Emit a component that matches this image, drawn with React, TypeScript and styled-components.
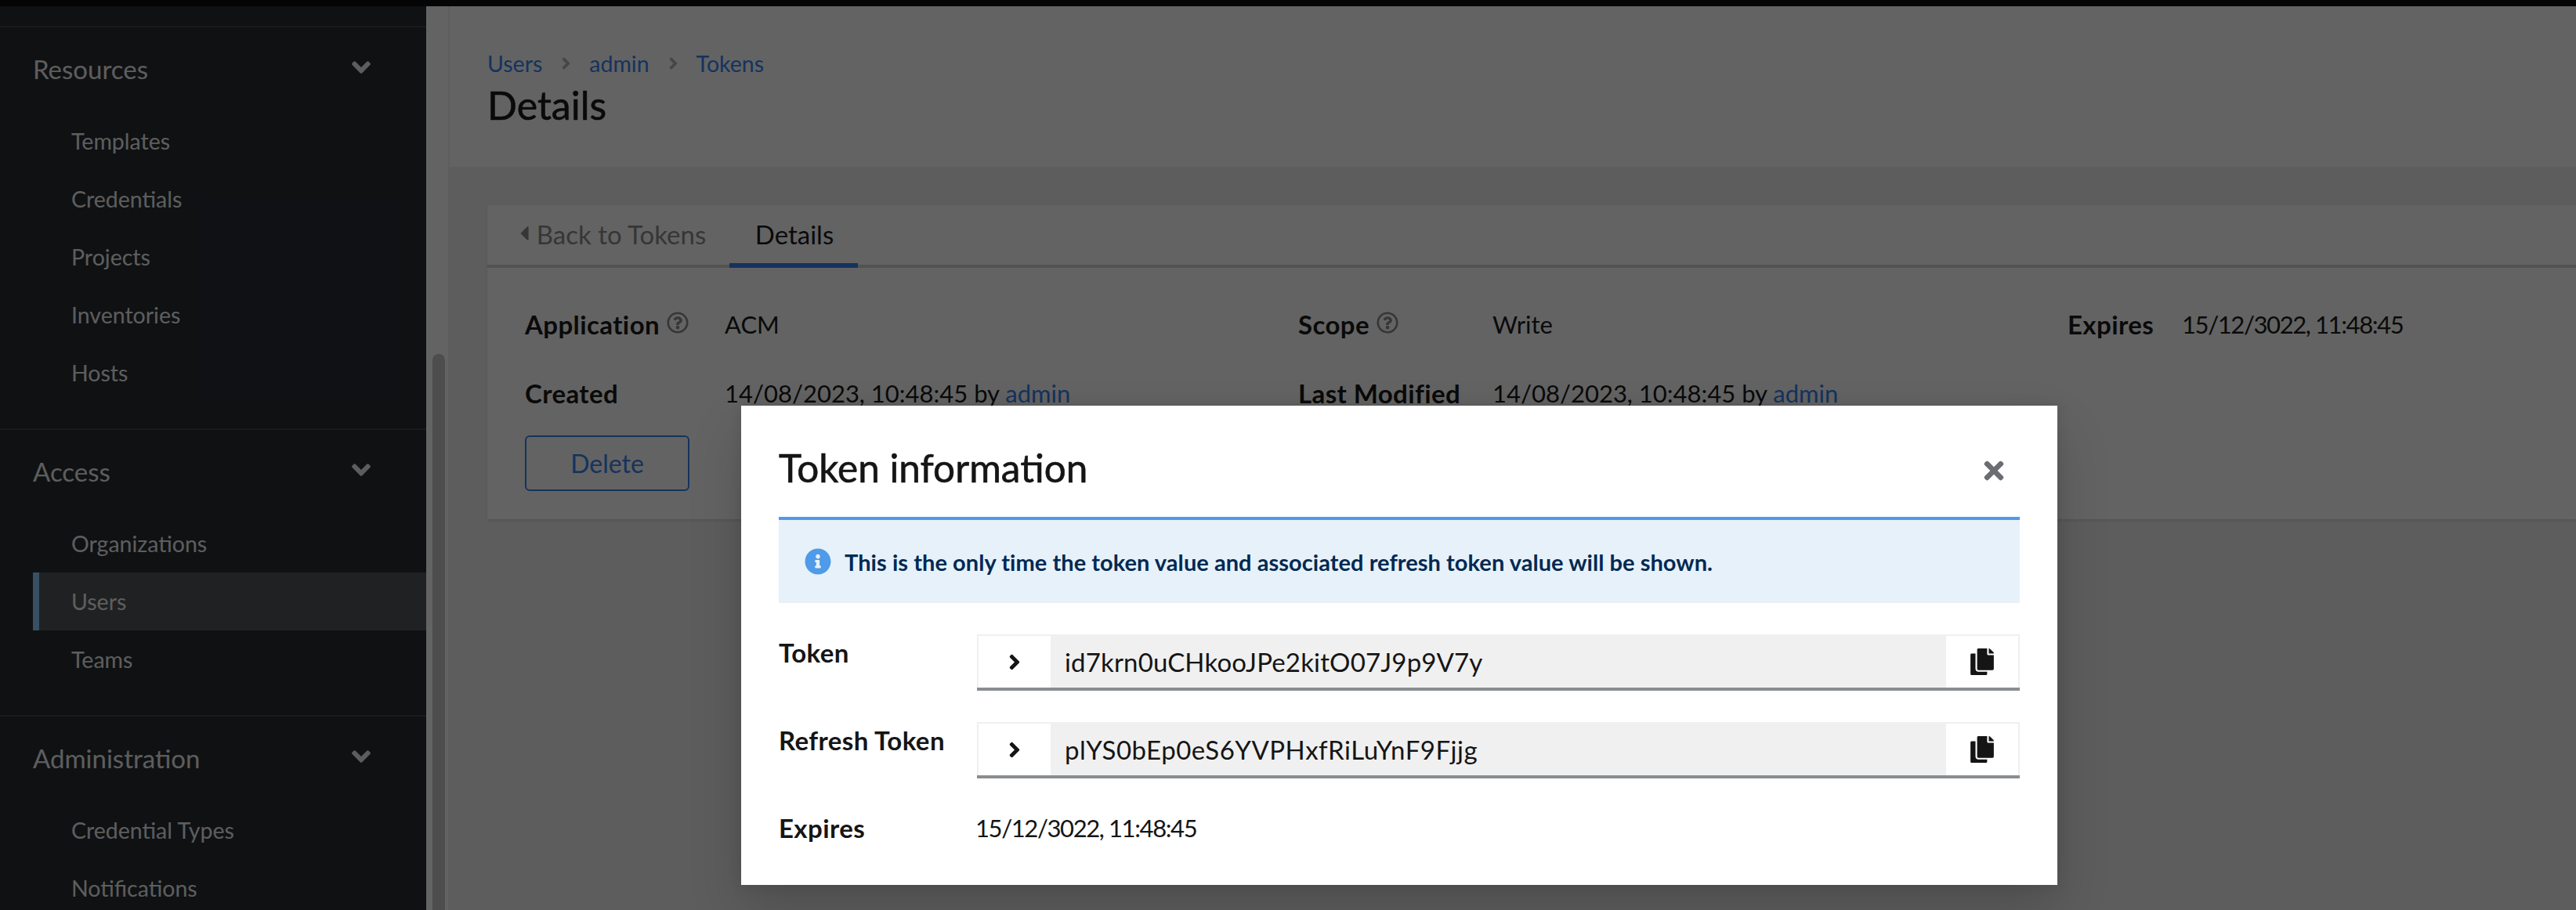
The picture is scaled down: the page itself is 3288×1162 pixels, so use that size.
import React from 'react';
import styled, { createGlobalStyle } from 'styled-components';
import {
  FaAngleDown,
  FaAngleRight,
  FaCaretLeft,
  FaCopy,
  FaInfoCircle,
  FaRegQuestionCircle,
  FaTimes,
} from 'react-icons/fa';

const GlobalStyle = createGlobalStyle`
  html, body {
    margin: 0;
    height: 100%;
    overflow: hidden;
    background: #050505;
    font-family: Lato, "Open Sans", sans-serif;
  }
  * { box-sizing: border-box; }
`;

const Page = styled.div`
  position: relative;
  width: 3288px;
  height: 1162px;
  overflow: hidden;
  display: flex;
  flex-direction: column;
`;

const TopBar = styled.div`
  height: 8px;
  flex: none;
  background: #0a0a0a;
`;

const Body = styled.div`
  flex: 1;
  min-height: 0;
  display: flex;
`;

const Sidebar = styled.nav`
  width: 544px;
  flex: none;
  background: #23282f;
  padding-top: 25px;
  overflow: hidden;
`;

const NavSection = styled.section`
  border-top: 2px solid #3c3f42;
  padding-bottom: 34px;
`;

const NavHeading = styled.div`
  height: 108px;
  padding: 0 71px 2px 42px;
  display: flex;
  align-items: center;
  justify-content: space-between;
  color: #f0f0f0;
  font-size: 33px;
  svg {
    width: 24px;
    height: 38px;
    margin-top: -4px;
  }
`;

const NavItem = styled.div<{ $active?: boolean }>`
  height: 74px;
  margin-left: 42px;
  padding-left: ${p => (p.$active ? '41px' : '49px')};
  display: flex;
  align-items: center;
  font-size: 28.5px;
  color: #f0f0f0;
  background: ${p => (p.$active ? '#4f5255' : 'transparent')};
  border-left: ${p => (p.$active ? '8px solid #8ecdff' : '0')};
`;

const ScrollTrack = styled.div`
  width: 28px;
  flex: none;
  padding: 444px 4px 0 8px;
  background: #fff;
`;

const ScrollThumb = styled.div`
  height: 100%;
  border-radius: 8px 8px 0 0;
  background: #c6c6c6;
`;

const Main = styled.main`
  flex: 1;
  min-width: 0;
  display: flex;
  flex-direction: column;
  background: #f0f0f0;
`;

const PageHeader = styled.header`
  height: 205px;
  flex: none;
  margin-left: 2px;
  padding: 50px 48px 0;
  background: #fff;
`;

const Breadcrumbs = styled.div`
  display: flex;
  align-items: center;
  height: 46px;
  font-size: 28.5px;
  color: #3480ee;
  svg {
    width: 15px;
    height: 24px;
    margin: 0 22px 0 23px;
    color: #b4b4b4;
  }
`;

const PageTitle = styled.h1`
  margin: 2px 0 0;
  font-size: 50px;
  line-height: 56px;
  font-weight: 400;
  -webkit-text-stroke: 0.6px #151515;
  color: #151515;
`;

const Content = styled.div`
  padding: 49px 0 0 50px;
`;

const Card = styled.div`
  height: 401px;
  background: #fff;
  box-shadow: 0 2px 4px rgba(3, 3, 3, 0.12);
`;

const Tabs = styled.div`
  height: 80px;
  display: flex;
  border-bottom: 4px solid #d2d2d2;
`;

const Tab = styled.div<{ $active?: boolean; $width: number; $inset?: number }>`
  width: ${p => p.$width}px;
  height: 80px;
  padding-left: ${p => p.$inset || 0}px;
  display: flex;
  align-items: center;
  justify-content: center;
  font-size: 33px;
  color: ${p => (p.$active ? '#151515' : '#8a8a8a')};
  border-bottom: 6px solid ${p => (p.$active ? '#3480ee' : 'transparent')};
  svg {
    width: 12px;
    height: 30px;
    margin: -2px 10px 0 0;
  }
`;

const Details = styled.div`
  padding: 48px 0 0 48px;
`;

const FieldGrid = styled.div`
  display: grid;
  grid-template-columns: 987px 982px 1fr;
  row-gap: 40px;
`;

const Field = styled.div`
  display: flex;
  align-items: center;
  height: 48px;
  font-size: 31px;
  color: #151515;
`;

const FieldLabel = styled.div<{ $width: number }>`
  width: ${p => p.$width}px;
  flex: none;
  display: flex;
  align-items: center;
  font-size: 33px;
  letter-spacing: 0.4px;
  font-weight: 700;
  svg {
    width: 28px;
    height: 28px;
    margin: -4px 0 0 9px;
    color: #8a8a8a;
  }
`;

const Link = styled.span`
  color: #3480ee;
`;

const DateText = styled.span`
  margin-left: -2px;
  letter-spacing: -1.4px;
`;

const DeleteButton = styled.div`
  width: 210px;
  height: 71px;
  margin-top: 30px;
  display: flex;
  align-items: center;
  justify-content: center;
  border: 2px solid #3480ee;
  border-radius: 6px;
  font-size: 32px;
  color: #3480ee;
`;

const Backdrop = styled.div`
  position: absolute;
  inset: 0;
  background: rgba(3, 3, 3, 0.62);
`;

const Modal = styled.div`
  position: absolute;
  left: 946px;
  top: 518px;
  width: 1680px;
  height: 612px;
  padding: 0 48px;
  background: #fff;
  box-shadow: 0 32px 64px rgba(3, 3, 3, 0.16), 0 0 16px rgba(3, 3, 3, 0.1);
`;

const ModalHeader = styled.div`
  height: 142px;
  padding-top: 49px;
  display: flex;
  justify-content: space-between;
`;

const ModalTitle = styled.h2`
  margin: 0;
  font-size: 49.5px;
  line-height: 60px;
  font-weight: 400;
  -webkit-text-stroke: 0.6px #151515;
  color: #151515;
`;

const CloseIcon = styled(FaTimes)`
  width: 26px;
  height: 36px;
  margin: 16px 20px 0 0;
  color: #6a6e73;
`;

const Alert = styled.div`
  height: 110px;
  padding-left: 33px;
  display: flex;
  align-items: center;
  gap: 17px;
  background: #e7f1fa;
  border-top: 4px solid #4f9ae9;
  font-size: 29px;
  letter-spacing: 0.05px;
  font-weight: 700;
  color: #002952;
  svg {
    width: 34px;
    height: 34px;
    color: #4f9ae9;
  }
`;

const ClipRow = styled.div`
  display: grid;
  grid-template-columns: 253px 1fr;
  margin-top: 40px;
`;

const ModalLabel = styled.div`
  font-size: 33px;
  letter-spacing: 0.4px;
  line-height: 46px;
  font-weight: 700;
  color: #151515;
`;

const ModalValue = styled.div`
  font-size: 31px;
  line-height: 46px;
  color: #151515;
`;

const ClipGroup = styled.div`
  height: 72px;
  display: flex;
  border-top: 2px solid #f0f0f0;
  border-bottom: 4px solid #8a8d90;
`;

const ClipButton = styled.div`
  width: 96px;
  flex: none;
  display: flex;
  align-items: center;
  justify-content: center;
  border: solid #f0f0f0;
  border-width: 0 2px;
  color: #151515;
`;

const ExpandIcon = styled(FaAngleRight)`
  width: 20px;
  height: 31px;
`;

const CopyIcon = styled(FaCopy)`
  width: 30px;
  height: 34px;
`;

const ClipInput = styled.div<{ $tracking: number }>`
  flex: 1;
  padding-left: 16px;
  display: flex;
  align-items: center;
  background: #f0f0f0;
  font-size: 33px;
  letter-spacing: ${p => p.$tracking}px;
  color: #151515;
`;

const sections = [
  { title: 'Resources', items: ['Templates', 'Credentials', 'Projects', 'Inventories', 'Hosts'] },
  { title: 'Access', items: ['Organizations', 'Users', 'Teams'] },
  { title: 'Administration', items: ['Credential Types', 'Notifications'] },
];

const tokens = [
  { label: 'Token', value: 'id7krn0uCHkooJPe2kitO07J9p9V7y', tracking: 0.15 },
  { label: 'Refresh Token', value: 'plYS0bEp0eS6YVPHxfRiLuYnF9Fjjg', tracking: 0.5 },
];

const App = () => (
  <Page>
    <GlobalStyle />
    <TopBar />
    <Body>
      <Sidebar>
        {sections.map(section => (
          <NavSection key={section.title}>
            <NavHeading>
              {section.title}
              <FaAngleDown />
            </NavHeading>
            {section.items.map(item => (
              <NavItem key={item} $active={item === 'Users'}>
                {item}
              </NavItem>
            ))}
          </NavSection>
        ))}
      </Sidebar>
      <ScrollTrack>
        <ScrollThumb />
      </ScrollTrack>
      <Main>
        <PageHeader>
          <Breadcrumbs>
            Users
            <FaAngleRight />
            admin
            <FaAngleRight />
            Tokens
          </Breadcrumbs>
          <PageTitle>Details</PageTitle>
        </PageHeader>
        <Content>
          <Card>
            <Tabs>
              <Tab $width={309} $inset={11}>
                <FaCaretLeft />
                Back to Tokens
              </Tab>
              <Tab $width={164} $inset={2} $active>
                Details
              </Tab>
            </Tabs>
            <Details>
              <FieldGrid>
                <Field>
                  <FieldLabel $width={255}>
                    Application
                    <FaRegQuestionCircle />
                  </FieldLabel>
                  ACM
                </Field>
                <Field>
                  <FieldLabel $width={248}>
                    Scope
                    <FaRegQuestionCircle />
                  </FieldLabel>
                  Write
                </Field>
                <Field>
                  <FieldLabel $width={148}>Expires</FieldLabel>
                  <DateText>15/12/3022, 11:48:45</DateText>
                </Field>
                <Field>
                  <FieldLabel $width={255}>Created</FieldLabel>
                  <span>
                    14/08/2023, 10:48:45 by <Link>admin</Link>
                  </span>
                </Field>
                <Field>
                  <FieldLabel $width={248}>Last Modified</FieldLabel>
                  <span>
                    14/08/2023, 10:48:45 by <Link>admin</Link>
                  </span>
                </Field>
              </FieldGrid>
              <DeleteButton>Delete</DeleteButton>
            </Details>
          </Card>
        </Content>
      </Main>
    </Body>
    <Backdrop />
    <Modal>
      <ModalHeader>
        <ModalTitle>Token information</ModalTitle>
        <CloseIcon />
      </ModalHeader>
      <Alert>
        <FaInfoCircle />
        This is the only time the token value and associated refresh token value will be shown.
      </Alert>
      {tokens.map(token => (
        <ClipRow key={token.label}>
          <ModalLabel>{token.label}</ModalLabel>
          <ClipGroup>
            <ClipButton>
              <ExpandIcon />
            </ClipButton>
            <ClipInput $tracking={token.tracking}>{token.value}</ClipInput>
            <ClipButton>
              <CopyIcon />
            </ClipButton>
          </ClipGroup>
        </ClipRow>
      ))}
      <ClipRow>
        <ModalLabel>Expires</ModalLabel>
        <ModalValue>
          <DateText>15/12/3022, 11:48:45</DateText>
        </ModalValue>
      </ClipRow>
    </Modal>
  </Page>
);

export default App;
